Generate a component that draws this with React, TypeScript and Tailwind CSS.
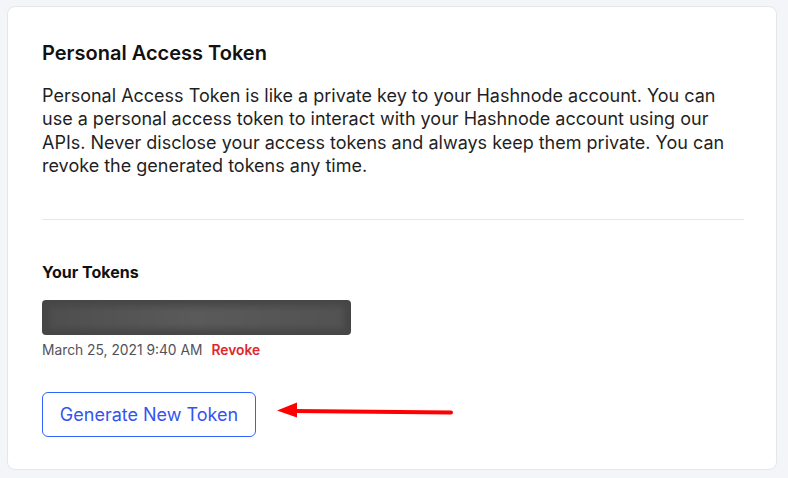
import React from "react";

export default function App() {
  return (
    <div className="w-[788px] h-[478px] bg-[#f4f5f9] pt-[6px] pl-[7px] pr-[11px]" style={{ fontFamily: "Inter, 'Noto Sans', sans-serif" }}>
      <div className="h-[464px] bg-white border border-[#e5e7eb] rounded-[8px] pl-[34px] pr-[32px] pt-[32px]">
        <h1 className="text-[20px] font-semibold text-[#111] leading-[28px]">Personal Access Token</h1>
        <p className="mt-[17px] w-[690px] text-[18px] leading-[23.4px] text-[#1f1f1f]">
          Personal Access Token is like a private key to your Hashnode account. You can use a personal access token to interact with your Hashnode account using our APIs. Never disclose your access tokens and always keep them private. You can revoke the generated tokens any time.
        </p>
        <div className="mt-[41px] border-t border-[#e5e7eb]" />
        <h2 className="mt-[42px] text-[16px] font-bold text-[#111] leading-[20px]">Your Tokens</h2>
        <div className="mt-[18px] w-[309px] h-[35px] rounded-[4px] bg-[#464646] px-[7px] py-[6px] overflow-hidden">
          <div className="w-full h-full bg-gradient-to-r from-[#4e4e4e] via-[#5a5a5a] to-[#525252] blur-[3px]" />
        </div>
        <div className="mt-[6px] flex items-center gap-[9px] text-[13.8px] leading-[18px]">
          <span className="text-[#52525b]">March 25, 2021 9:40 AM</span>
          <span className="text-[#e0262c] font-semibold">Revoke</span>
        </div>
        <div className="mt-[33px] flex items-center">
          <button className="h-[45px] w-[214px] border border-[#2f63ff] rounded-[6px] text-[18px] text-[#3354f0] bg-white">
            Generate New Token
          </button>
          <svg width="180" height="24" viewBox="0 0 180 24" className="ml-[20px]">
            <line x1="18" y1="9" x2="175" y2="10.5" stroke="#ff0000" strokeWidth="4" strokeLinecap="round" />
            <polygon points="1,8.5 21,0.5 21,15.5" fill="#ff0000" />
          </svg>
        </div>
      </div>
    </div>
  );
}
